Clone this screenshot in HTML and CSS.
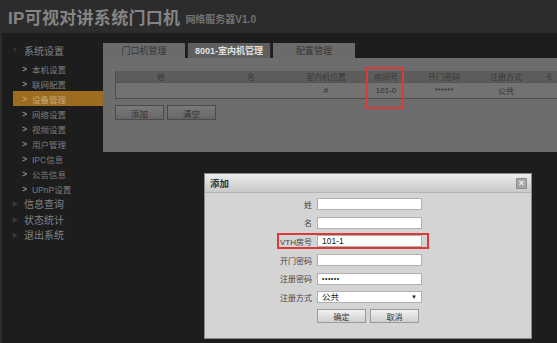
FILE: index.html
```html
<!DOCTYPE html>
<html lang="zh-CN">
  <head>
    <meta charset="UTF-8" />
    <title>IP可视对讲系统门口机</title>
    <link rel="stylesheet" href="styles.css">
  </head>
  <body>
    <div class="screen">
      <div class="header">
        <span class="title">IP可视对讲系统门口机</span>
        <span class="subtitle">网络服务器V1.0</span>
      </div>
      <div class="main">
        <div class="sidebar">
          <div class="group open"><span class="arrow">▼</span>系统设置</div>
          <div class="item"><span class="chev">&gt;</span>本机设置</div>
          <div class="item"><span class="chev">&gt;</span>联网配置</div>
          <div class="item active"><span class="chev">&gt;</span>设备管理</div>
          <div class="item"><span class="chev">&gt;</span>网络设置</div>
          <div class="item"><span class="chev">&gt;</span>视频设置</div>
          <div class="item"><span class="chev">&gt;</span>用户管理</div>
          <div class="item"><span class="chev">&gt;</span>IPC信息</div>
          <div class="item"><span class="chev">&gt;</span>公告信息</div>
          <div class="item"><span class="chev">&gt;</span>UPnP设置</div>
          <div class="group"><span class="arrow">▶</span>信息查询</div>
          <div class="group"><span class="arrow">▶</span>状态统计</div>
          <div class="group"><span class="arrow">▶</span>退出系统</div>
        </div>
        <div class="content">
          <div class="tabs">
            <div class="tab">门口机管理</div>
            <div class="tab current">8001-室内机管理</div>
            <div class="tab">配置管理</div>
          </div>
          <div class="panel">
            <div class="table">
              <div class="row head">
                <span>姓</span><span>名</span><span>室内机位置</span><span>房间号</span><span>开门密码</span><span>注册方式</span><span>卡</span>
              </div>
              <div class="row data">
                <span></span><span></span><span>#</span><span>101-0</span><span>******</span><span>公共</span><span></span>
              </div>
              <div class="mark"></div>
            </div>
            <div class="actions">
              <button class="btn">添加</button>
              <button class="btn">清空</button>
            </div>
          </div>
        </div>
      </div>

      <div class="dialog">
        <div class="dialog-title">
          <span>添加</span>
          <span class="close">×</span>
        </div>
        <div class="dialog-body">
          <div class="field"><label>姓</label><div class="input"></div></div>
          <div class="field"><label>名</label><div class="input"></div></div>
          <div class="field marked"><label>VTH房号</label><div class="input">101-1</div></div>
          <div class="field"><label>开门密码</label><div class="input"></div></div>
          <div class="field"><label>注册密码</label><div class="input dots">••••••</div></div>
          <div class="field"><label>注册方式</label><div class="input select">公共<span class="caret">▼</span></div></div>
          <div class="dialog-actions">
            <button class="dbtn">确定</button>
            <button class="dbtn">取消</button>
          </div>
        </div>
      </div>
    </div>
  </body>
</html>
```

FILE: styles.css
```css
body {
  margin: 0;
  background-color: #1d1d1d;
  font-family: "Liberation Sans", "Noto Sans CJK SC", sans-serif;
  overflow: hidden;
}

.screen {
  position: relative;
  width: 557px;
  height: 343px;
  overflow: hidden;
  border-left: 2px solid #2c2c2c;
  box-sizing: border-box;
}

.header {
  height: 33px;
  background: #2c2c2c;
  display: flex;
  align-items: center;
  padding-left: 6px;
  gap: 5px;
}

.title {
  font-size: 17px;
  font-weight: bold;
  color: #858585;
  letter-spacing: 0.3px;
}

.subtitle {
  font-size: 10px;
  font-weight: bold;
  color: #727272;
  margin-top: 4px;
}

.main {
  display: flex;
}

.sidebar {
  width: 101px;
  flex-shrink: 0;
  padding-top: 9px;
  font-size: 8.5px;
  color: #7c7c7c;
}

.group {
  height: 15.5px;
  display: flex;
  align-items: center;
  padding-left: 10px;
  font-size: 10px;
  color: #828282;
}

.group.open {
  height: 16px;
  margin-bottom: 3px;
}

.arrow {
  font-size: 6px;
  color: #3a3a3a;
  width: 12px;
}

.item {
  height: 15px;
  display: flex;
  align-items: center;
  padding-left: 20px;
}

.chev {
  color: #8a8a8a;
  width: 10px;
  font-weight: bold;
}

.item.active {
  background: #9c6d20;
  color: #c2a877;
  margin-left: 11px;
  padding-left: 9px;
}

.item.active .chev {
  color: #c29e60;
}

.content {
  flex: 1;
  padding-top: 10px;
}

.tabs {
  display: flex;
  height: 15px;
  gap: 2px;
}

.tab {
  width: 82px;
  background: #6b6b6b;
  color: #363636;
  font-size: 9px;
  display: flex;
  align-items: center;
  justify-content: center;
}

.tab.current {
  background: #5e5e5e;
  color: #e2e2e2;
  font-weight: bold;
  border-left: 1px solid #2a2a2a;
  border-right: 1px solid #2a2a2a;
}

.panel {
  background: #6d6d6d;
  height: 94px;
  padding: 13px 0 0 12px;
  box-sizing: border-box;
}

.table {
  position: relative;
  border-bottom: 1px solid #4d4d4d;
  border-left: 1px solid #4d4d4d;
  width: 600px;
}

.row {
  display: grid;
  grid-template-columns: 90px 90px 60px 60px 56px 68px 18px;
  font-size: 8px;
  text-align: center;
  align-items: center;
}

.row.head {
  height: 11px;
  background: #5c5c5c;
  color: #383838;
}

.row.data {
  height: 15px;
  background: #727272;
  color: #2e2e2e;
  border-top: 1px solid #555555;
}

.mark {
  position: absolute;
  left: 250px;
  top: -4px;
  width: 34px;
  height: 38px;
  border: 2px solid #d93a3a;
}

.actions {
  display: flex;
  gap: 3px;
  margin-top: 6px;
}

.btn {
  width: 49px;
  height: 15px;
  padding: 0;
  font-family: inherit;
  font-size: 8.5px;
  color: #2f2f2f;
  background: linear-gradient(#7a7a7a, #666666);
  border: 1px solid #4a4a4a;
}

.dialog {
  position: absolute;
  left: 202px;
  top: 173px;
  width: 328px;
  height: 166px;
  border: 1px solid #8a8a8a;
  background: #d4d4d4;
  box-sizing: border-box;
}

.dialog-title {
  height: 18px;
  background: linear-gradient(#ececec, #c9c9c9);
  border-bottom: 1px solid #b5b5b5;
  display: flex;
  align-items: center;
  justify-content: space-between;
  padding: 0 4px 0 5px;
  font-size: 9.5px;
  font-weight: bold;
  color: #333333;
}

.close {
  width: 9px;
  height: 9px;
  background: #a8a8a8;
  color: #eeeeee;
  font-size: 9px;
  line-height: 8px;
  text-align: center;
  border: 1px solid #8c8c8c;
}

.dialog-body {
  padding-top: 5px;
  display: flex;
  flex-direction: column;
  gap: 6.7px;
}

.field {
  display: flex;
  align-items: center;
  height: 12px;
}

.field label {
  width: 107px;
  text-align: right;
  padding-right: 5px;
  font-size: 8px;
  color: #444444;
}

.input {
  width: 105px;
  height: 12px;
  background: #ffffff;
  border: 1px solid #b0b0b0;
  box-sizing: border-box;
  font-size: 8.5px;
  padding-left: 4px;
  line-height: 10px;
  color: #222222;
}

.field.marked {
  position: relative;
}

.field.marked::after {
  content: "";
  position: absolute;
  left: 72px;
  top: -2px;
  width: 148px;
  height: 12px;
  border: 2px solid #d93a3a;
}

.dots {
  font-size: 7px;
  letter-spacing: 0.5px;
}

.select {
  display: flex;
  justify-content: space-between;
  padding-right: 4px;
}

.caret {
  font-size: 6px;
}

.dialog-actions {
  display: flex;
  gap: 4px;
  padding-left: 112px;
  margin-top: -1px;
}

.dbtn {
  width: 49px;
  height: 14px;
  padding: 0;
  font-family: inherit;
  font-size: 8px;
  color: #333333;
  background: linear-gradient(#f2f2f2, #cfcfcf);
  border: 1px solid #9a9a9a;
}
```
